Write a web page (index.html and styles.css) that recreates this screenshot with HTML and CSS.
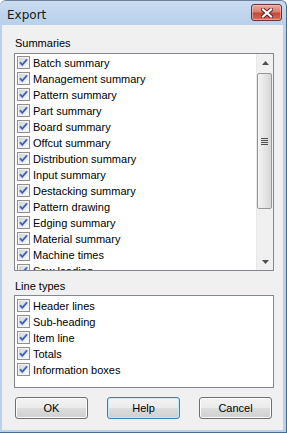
FILE: index.html
```html
<!DOCTYPE html>
<html lang="en">

<head>
    <meta charset="UTF-8">
    <meta name="viewport" content="width=device-width, initial-scale=1.0">
    <title>Export</title>
    <link rel="stylesheet" href="styles.css">
</head>

<body>
    <svg class="defs" width="0" height="0">
        <defs>
            <linearGradient id="cb-fill" x1="0" y1="0" x2="1" y2="1">
                <stop offset="0" stop-color="#d4d4d4" />
                <stop offset="1" stop-color="#fbfbfb" />
            </linearGradient>
            <symbol id="check" viewBox="0 0 13 13">
                <rect x="0.5" y="0.5" width="12" height="12" fill="#f4f4f4" stroke="#8e8f8f" />
                <rect x="2" y="2" width="9" height="9" fill="url(#cb-fill)" />
                <path d="M3 6.2 L5.3 8.8 L10 3.4" fill="none" stroke="#6a8ad6" stroke-width="2.2" />
                <path d="M3 6.2 L5.3 8.8 L10 3.4" fill="none" stroke="#2c48a0" stroke-width="1" />
            </symbol>
        </defs>
    </svg>

    <div class="window">
        <div class="titlebar">
            <span class="title">Export</span>
            <span class="close">
                <svg width="12" height="10" viewBox="0 0 12 10">
                    <path d="M2 1.5 L10 8.5 M10 1.5 L2 8.5" stroke="#5b2020" stroke-width="4" stroke-linecap="square" />
                    <path d="M2 1.5 L10 8.5 M10 1.5 L2 8.5" stroke="#ffffff" stroke-width="2.2" stroke-linecap="square" />
                </svg>
            </span>
        </div>

        <div class="client">
            <div class="label">Summaries</div>
            <div class="listbox summaries">
                <ul class="items">
                    <li><svg class="cb"><use href="#check"></use></svg>Batch summary</li>
                    <li><svg class="cb"><use href="#check"></use></svg>Management summary</li>
                    <li><svg class="cb"><use href="#check"></use></svg>Pattern summary</li>
                    <li><svg class="cb"><use href="#check"></use></svg>Part summary</li>
                    <li><svg class="cb"><use href="#check"></use></svg>Board summary</li>
                    <li><svg class="cb"><use href="#check"></use></svg>Offcut summary</li>
                    <li><svg class="cb"><use href="#check"></use></svg>Distribution summary</li>
                    <li><svg class="cb"><use href="#check"></use></svg>Input summary</li>
                    <li><svg class="cb"><use href="#check"></use></svg>Destacking summary</li>
                    <li><svg class="cb"><use href="#check"></use></svg>Pattern drawing</li>
                    <li><svg class="cb"><use href="#check"></use></svg>Edging summary</li>
                    <li><svg class="cb"><use href="#check"></use></svg>Material summary</li>
                    <li><svg class="cb"><use href="#check"></use></svg>Machine times</li>
                    <li><svg class="cb"><use href="#check"></use></svg>Saw loading</li>
                </ul>
                <div class="scrollbar">
                    <div class="sb-btn">
                        <svg width="7" height="4" viewBox="0 0 7 4"><path d="M0 4 L3.5 0 L7 4 Z" fill="#4f4f4f" /></svg>
                    </div>
                    <div class="sb-track">
                        <div class="sb-thumb">
                            <svg width="7" height="7" viewBox="0 0 7 7">
                                <path d="M0 0.5 H7 M0 2.5 H7 M0 4.5 H7 M0 6.5 H7" stroke="#4c4c4c" stroke-width="1" />
                            </svg>
                        </div>
                    </div>
                    <div class="sb-btn">
                        <svg width="7" height="4" viewBox="0 0 7 4"><path d="M0 0 L3.5 4 L7 0 Z" fill="#4f4f4f" /></svg>
                    </div>
                </div>
            </div>

            <div class="label second">Line types</div>
            <div class="listbox lines">
                <ul class="items">
                    <li><svg class="cb"><use href="#check"></use></svg>Header lines</li>
                    <li><svg class="cb"><use href="#check"></use></svg>Sub-heading</li>
                    <li><svg class="cb"><use href="#check"></use></svg>Item line</li>
                    <li><svg class="cb"><use href="#check"></use></svg>Totals</li>
                    <li><svg class="cb"><use href="#check"></use></svg>Information boxes</li>
                </ul>
            </div>

            <div class="buttons">
                <button class="btn">OK</button>
                <button class="btn focused">Help</button>
                <button class="btn">Cancel</button>
            </div>
        </div>
    </div>
</body>

</html>
```

FILE: styles.css
```css
* {
    padding: 0;
    margin: 0;
    box-sizing: border-box;
}

body {
    background: #ffffff;
    font-family: "Liberation Sans", Arial, sans-serif;
    font-size: 11px;
    color: #000000;
}

.defs {
    position: absolute;
}

.window {
    width: 287px;
    height: 433px;
    display: flex;
    flex-direction: column;
    background: #b9d1ea;
    border-top: 1px solid #6d819b;
    border-right: 1px solid #4b6a90;
    border-bottom: 1px solid #4b6a90;
    border-radius: 6px 6px 0 0;
}

.titlebar {
    height: 24px;
    display: flex;
    align-items: flex-start;
    justify-content: space-between;
    padding: 0 4px 0 7px;
    background: linear-gradient(#c9dcf1, #b8d0ea);
    border-radius: 6px 6px 0 0;
}

.title {
    font-family: "DejaVu Sans", sans-serif;
    font-size: 12px;
    line-height: 24px;
    color: #1a1a1a;
    padding-top: 2px;
}

.close {
    width: 31px;
    height: 17px;
    margin-top: 3px;
    display: flex;
    align-items: center;
    justify-content: center;
    border: 1px solid #6b3236;
    border-radius: 3px;
    background: linear-gradient(#e9a99c 0%, #d9826f 45%, #c6473b 55%, #d1705c 100%);
    box-shadow: inset 0 0 0 1px rgba(255, 220, 210, 0.45);
}

.client {
    flex: 1;
    margin: 0 3px 2px 2px;
    padding: 12px 9px 0 12px;
    background: #f0f0f0;
    display: flex;
    flex-direction: column;
}

.label {
    line-height: 13px;
    margin-left: 1px;
    margin-bottom: 3px;
}

.label.second {
    margin-top: 9px;
    margin-bottom: 2px;
}

.listbox {
    display: flex;
    background: #ffffff;
    border: 1px solid #828790;
    overflow: hidden;
}

.summaries {
    height: 218px;
}

.lines {
    height: 93px;
}

.items {
    flex: 1;
    list-style-type: none;
    padding: 1px 0 0 2px;
    overflow: hidden;
}

.lines .items {
    padding-top: 2px;
}

.items li {
    height: 16px;
    line-height: 16px;
    display: flex;
    white-space: nowrap;
}

.cb {
    width: 13px;
    height: 13px;
    margin: 1px 3px 0 0;
    flex: none;
}

.scrollbar {
    width: 17px;
    display: flex;
    flex-direction: column;
    background: #f0f0f0;
    border-left: 1px solid #e8e8e8;
}

.sb-btn {
    height: 17px;
    display: flex;
    align-items: center;
    justify-content: center;
}

.sb-track {
    flex: 1;
    padding: 2px 1px 0 0;
}

.sb-thumb {
    height: 136px;
    display: flex;
    align-items: center;
    justify-content: center;
    border: 1px solid #979797;
    border-radius: 2px;
    background: linear-gradient(to right, #f3f3f3, #e6e6e6 50%, #d6d6d6);
}

.buttons {
    display: flex;
    gap: 19px;
    margin: 9px 0 0 1px;
}

.btn {
    width: 73px;
    height: 22px;
    font-family: "Liberation Sans", Arial, sans-serif;
    font-size: 11px;
    color: #000000;
    border: 1px solid #707070;
    border-radius: 3px;
    background: linear-gradient(#f2f2f2 0%, #ebebeb 50%, #dddddd 51%, #cfcfcf 100%);
    box-shadow: inset 0 0 0 1px #fcfcfc;
}

.btn.focused {
    border-color: #3c7fb1;
    box-shadow: inset 0 0 0 1px #c6e8f8;
}
```
